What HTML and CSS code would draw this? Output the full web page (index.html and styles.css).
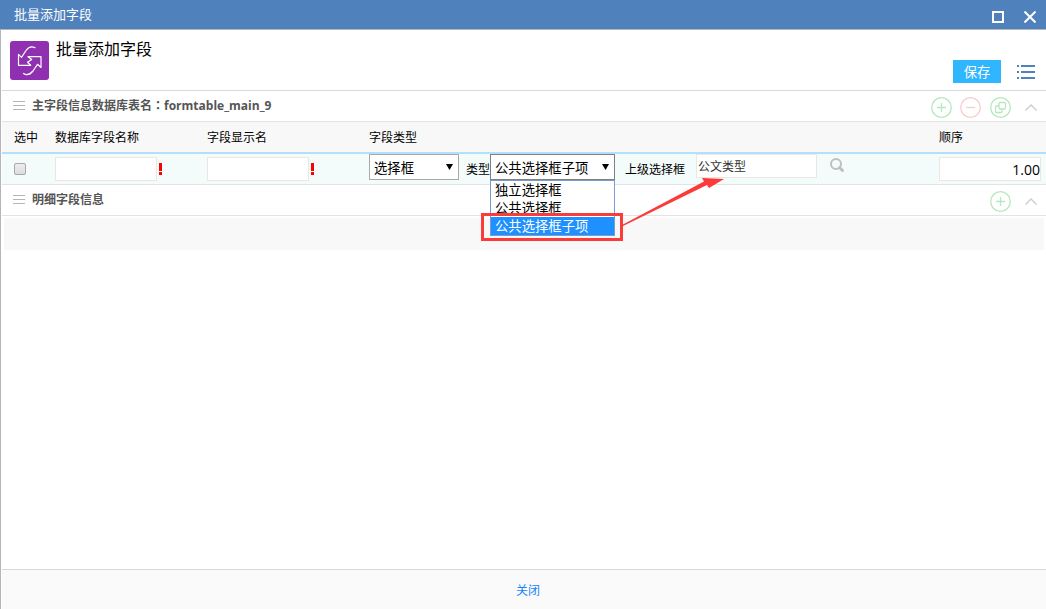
FILE: index.html
```
<!DOCTYPE html>
<html lang="zh-CN">
<head>
<meta charset="utf-8">
<title>批量添加字段</title>
<link rel="stylesheet" href="styles.css">
</head>
<body>
<div class="dialog">
  <header class="titlebar">
    <span class="titlebar-text">批量添加字段</span>
    <button class="window-button" type="button" aria-label="最大化">
      <svg width="12" height="12" viewBox="0 0 12 12"><path d="M1 1h10v10H1z" fill="none" stroke="#fff" stroke-width="2"/></svg>
    </button>
    <button class="window-button" type="button" aria-label="关闭窗口">
      <svg width="12" height="12" viewBox="0 0 12 12"><path d="M.5.5l11 11M11.5.5l-11 11" fill="none" stroke="#fff" stroke-width="2"/></svg>
    </button>
  </header>

  <div class="frame">
  <main class="content">
    <div class="page-head">
      <svg class="app-icon" width="39" height="39" viewBox="0 0 39 39">
        <rect width="39" height="39" rx="3" fill="#8e30b0"/>
        <path d="M25 6.700C21 4.500 18.500 6 16 9.500L11.500 16.300 8.500 13.300V24.300H20.700L17.500 21.300 21.700 18.500 18 15.700H31V26.500L27.500 23.300 23 30C20 33.500 16.500 34.500 13.500 32.500" fill="none" stroke="#fff" stroke-width="1.200" stroke-linejoin="round" stroke-linecap="round"/>
      </svg>
      <h1 class="page-title">批量添加字段</h1>
      <div class="page-actions">
        <button class="save-button" type="button">保存</button>
        <button class="icon-button" type="button" aria-label="菜单">
          <svg width="18" height="14" viewBox="0 0 18 14"><path d="M0 1h2M4 1h14M0 7h2M4 7h14M0 13h2M4 13h14" stroke="#4f81bd" stroke-width="2"/></svg>
        </button>
      </div>
    </div>

    <section>
      <div class="section-bar">
        <svg class="grip" width="12" height="9" viewBox="0 0 12 9"><path d="M0 .5h12M0 4.500h12M0 8.500h12" stroke="#b5b5b5"/></svg>
        <h2 class="section-title">主字段信息数据库表名<span class="colon" lang="zh-TW">：</span>formtable_main_9</h2>
        <div class="section-tools">
          <button class="icon-button" type="button" aria-label="添加">
            <svg width="21" height="21" viewBox="0 0 21 21" fill="none" stroke="#b5e8bd"><circle cx="10.500" cy="10.500" r="9.800" stroke-width="1.300"/><path d="M6 10.500h9M10.500 6v9" stroke-width="1.300"/></svg>
          </button>
          <button class="icon-button" type="button" aria-label="删除">
            <svg width="21" height="21" viewBox="0 0 21 21" fill="none" stroke="#f7cccc"><circle cx="10.500" cy="10.500" r="9.800" stroke-width="1.300"/><path d="M6 10.500h9" stroke-width="1.300"/></svg>
          </button>
          <button class="icon-button copy" type="button" aria-label="复制">
            <svg width="21" height="21" viewBox="0 0 21 21" fill="none" stroke="#b5e8bd" stroke-width="1.300"><circle cx="10.500" cy="10.500" r="9.800"/><rect x="9" y="5.500" width="6.500" height="6.500" rx="1"/><path d="M9 9H6.500a1 1 0 0 0-1 1v4.500a1 1 0 0 0 1 1H11a1 1 0 0 0 1-1V12"/></svg>
          </button>
          <button class="icon-button collapse" type="button" aria-label="收起">
            <svg width="12" height="7" viewBox="0 0 12 7"><path d="M.5 6.500L6 1l5.500 5.500" fill="none" stroke="#ccc" stroke-width="1.300"/></svg>
          </button>
        </div>
      </div>

      <table class="fields">
        <colgroup>
          <col class="col-check"><col class="col-name"><col class="col-label"><col><col class="col-order">
        </colgroup>
        <thead>
          <tr><th>选中</th><th>数据库字段名称</th><th>字段显示名</th><th>字段类型</th><th>顺序</th></tr>
        </thead>
        <tbody>
          <tr>
            <td><input class="check" type="checkbox" aria-label="选中"></td>
            <td><div class="cell"><input class="text-input" type="text" aria-label="数据库字段名称"><span class="required"></span></div></td>
            <td><div class="cell"><input class="text-input" type="text" aria-label="字段显示名"><span class="required"></span></div></td>
            <td>
              <div class="cell type-cell">
                <span class="select-wrap">
                  <select class="select field-type" aria-label="字段类型"><option>选择框</option></select>
                  <span class="caret"></span>
                </span>
                <label class="kind-label" for="kind">类型</label>
                <span class="select-wrap">
                  <select class="select kind open" id="kind"><option>公共选择框子项</option></select>
                  <span class="caret"></span>
                  <span class="options" role="listbox">
                    <button class="option" type="button" role="option">独立选择框</button>
                    <button class="option" type="button" role="option">公共选择框</button>
                    <button class="option selected" type="button" role="option">公共选择框子项</button>
                  </span>
                  <span class="highlight"></span>
                  <svg class="arrow" width="104" height="50" viewBox="0 0 104 50"><path d="M0 47.500L83 3.500 81 0 103 1 88 10 86 7 0 49z" fill="#fb3a3a"/></svg>
                </span>
                <label class="parent-label" for="parent">上级选择框</label>
                <input class="text-input parent-input" id="parent" type="text" value="公文类型">
                <button class="icon-button search" type="button" aria-label="搜索">
                  <svg width="15" height="15" viewBox="0 0 15 15" fill="none" stroke="#bfbfbf"><circle cx="6" cy="6" r="5" stroke-width="2"/><path d="M9.500 9.500L12.500 12.500" stroke-width="3" stroke-linecap="round"/></svg>
                </button>
              </div>
            </td>
            <td><input class="text-input order-input" type="text" value="1.00" aria-label="顺序"></td>
          </tr>
        </tbody>
      </table>
    </section>

    <section>
      <div class="section-bar">
        <svg class="grip" width="12" height="9" viewBox="0 0 12 9"><path d="M0 .5h12M0 4.500h12M0 8.500h12" stroke="#b5b5b5"/></svg>
        <h2 class="section-title">明细字段信息</h2>
        <div class="section-tools">
          <button class="icon-button" type="button" aria-label="添加明细">
            <svg width="21" height="21" viewBox="0 0 21 21" fill="none" stroke="#b5e8bd"><circle cx="10.500" cy="10.500" r="9.800" stroke-width="1.300"/><path d="M6 10.500h9M10.500 6v9" stroke-width="1.300"/></svg>
          </button>
          <button class="icon-button collapse" type="button" aria-label="收起明细">
            <svg width="12" height="7" viewBox="0 0 12 7"><path d="M.5 6.500L6 1l5.500 5.500" fill="none" stroke="#ccc" stroke-width="1.300"/></svg>
          </button>
        </div>
      </div>
      <div class="detail-body"></div>
    </section>
  </main>

  <footer class="footer"><button class="close-button" type="button">关闭</button></footer>
  </div>
</div>
</body>
</html>
```
FILE: styles.css
```
* { box-sizing: border-box; }

body {
  margin: 0;
  font-family: "Open Sans", "Noto Sans CJK SC", sans-serif;
  font-size: 12px;
  color: #000;
}

button, input, select { font-family: inherit; }

button {
  padding: 0;
  border: 0;
  background: none;
}

svg { display: block; }

.dialog {
  display: flex;
  flex-direction: column;
  min-height: 100vh;
}

.titlebar {
  display: flex;
  align-items: center;
  gap: 20px;
  height: 30px;
  padding: 0 10px 0 14px;
  border-bottom: 1px solid #b5b5b9;
  background: #4f81bd;
  color: #fff;
  font-size: 13px;
}

.titlebar-text {
  flex: 1;
  padding-bottom: 2px;
}

.window-button { padding-top: 4px; }

.frame {
  display: flex;
  flex: 1;
  flex-direction: column;
  padding-left: 1px;
  border-left: 1px solid #b5b5b9;
  background: #fff;
}

.content { flex: 1; }

.page-head {
  display: flex;
  height: 61px;
  padding: 11px 11px 0 8px;
  border-bottom: 1px solid #d9d9d9;
}

.page-title {
  flex: 1;
  margin: 0 0 0 7px;
  font-size: 16px;
  line-height: 16px;
  font-weight: 400;
}

.page-actions {
  display: flex;
  align-items: center;
  gap: 16px;
  height: 23px;
  margin-top: 19px;
}

.save-button {
  width: 48px;
  height: 23px;
  background: #30b5ff;
  color: #fff;
}

.section-bar {
  display: flex;
  align-items: center;
  height: 31px;
  padding: 0 9px 2px 11px;
  border-bottom: 1px solid #e3e3e3;
}

.section-title {
  flex: 1;
  margin: 0 0 0 7px;
  color: #555;
  font-size: 12px;
  font-weight: 700;
}

.colon { font-family: "Noto Sans CJK TC", sans-serif; }

.section-tools {
  display: flex;
  align-items: center;
  gap: 8px;
  padding-top: 4px;
}

.copy { margin-left: 1px; }
.collapse { margin-left: 6px; }

.fields {
  width: 100%;
  table-layout: fixed;
  border-collapse: separate;
  border-spacing: 0;
}

.col-check { width: 53px; }
.col-name { width: 152px; }
.col-label { width: 162px; }
.col-order { width: 107px; }

.fields th {
  height: 32px;
  padding: 0;
  border-bottom: 2px solid #b3dffb;
  background: #f8f8f8;
  font-weight: 400;
  text-align: left;
}

.fields td {
  height: 31px;
  padding: 0;
  border-bottom: 1px solid #e3e3e3;
  background: #f4fbfb;
}

.fields th:first-child,
.fields td:first-child { padding-left: 12px; }

.check {
  display: block;
  width: 12px;
  height: 12px;
  margin: 0;
  appearance: none;
  border: 1px solid #a8a8a8;
  border-radius: 2px;
  background: linear-gradient(#ededed, #dcdcdc);
}

.cell {
  display: flex;
  align-items: center;
}

.text-input {
  width: 102px;
  height: 24px;
  padding: 0 1px;
  border: 1px solid #e9e9e2;
  border-radius: 0;
  background: #fff;
  color: #333;
  font-size: 12px;
}

.required {
  width: 3px;
  height: 12px;
  margin-left: 2px;
  background: linear-gradient(#f00 8px, transparent 8px, transparent 9px, #f00 9px);
}

.select-wrap {
  display: flex;
  position: relative;
}

.select {
  height: 26px;
  padding: 1px 4px 0;
  appearance: none;
  border: 1px solid #a9a9a9;
  border-radius: 0;
  background: #fff;
  color: #000;
}

.field-type { width: 90px; }
.kind { width: 125px; }
.open { border-color: #7f7f7f; }

.caret {
  position: absolute;
  top: 10px;
  right: 6px;
  width: 7px;
  height: 6px;
  background: #000;
  clip-path: polygon(0 0, 100% 0, 50% 100%);
  pointer-events: none;
}

.type-cell {
  align-items: flex-start;
  height: 30px;
}

.kind-label,
.parent-label { line-height: 32px; }

.kind-label { margin-left: 7px; }

.parent-label { margin-left: 10px; }

.parent-input {
  width: 121px;
  margin-left: 11px;
}

.search { margin: 4px 0 0 13px; }

.options {
  position: absolute;
  z-index: 1;
  top: 26px;
  left: 0;
  width: 125px;
  border: 1px solid #7a9ad4;
  background: #fff;
}

.option {
  display: block;
  width: 100%;
  height: 18px;
  padding-left: 4px;
  color: #000;
  line-height: 18px;
  text-align: left;
}

.selected {
  background: #1e90ff;
  color: #fff;
}

.highlight {
  position: absolute;
  z-index: 2;
  top: 59px;
  left: -9px;
  width: 142px;
  height: 28px;
  border: 3px solid #fb3a3a;
}

.arrow {
  position: absolute;
  z-index: 2;
  top: 24px;
  left: 131px;
}

.order-input {
  display: block;
  padding-right: 0;
  color: #000;
  font-size: 14px;
  text-align: right;
}

.detail-body {
  height: 32px;
  margin: 2px 2px 0;
  background: #f8f8f8;
}

.footer {
  display: flex;
  align-items: center;
  justify-content: center;
  height: 40px;
  padding-right: 0;
  padding-left: 8px;
  border-top: 1px solid #d9d9d9;
  background: #fafafa;
}

.close-button {
  color: #1684fc;
  font-size: 12px;
}
```
